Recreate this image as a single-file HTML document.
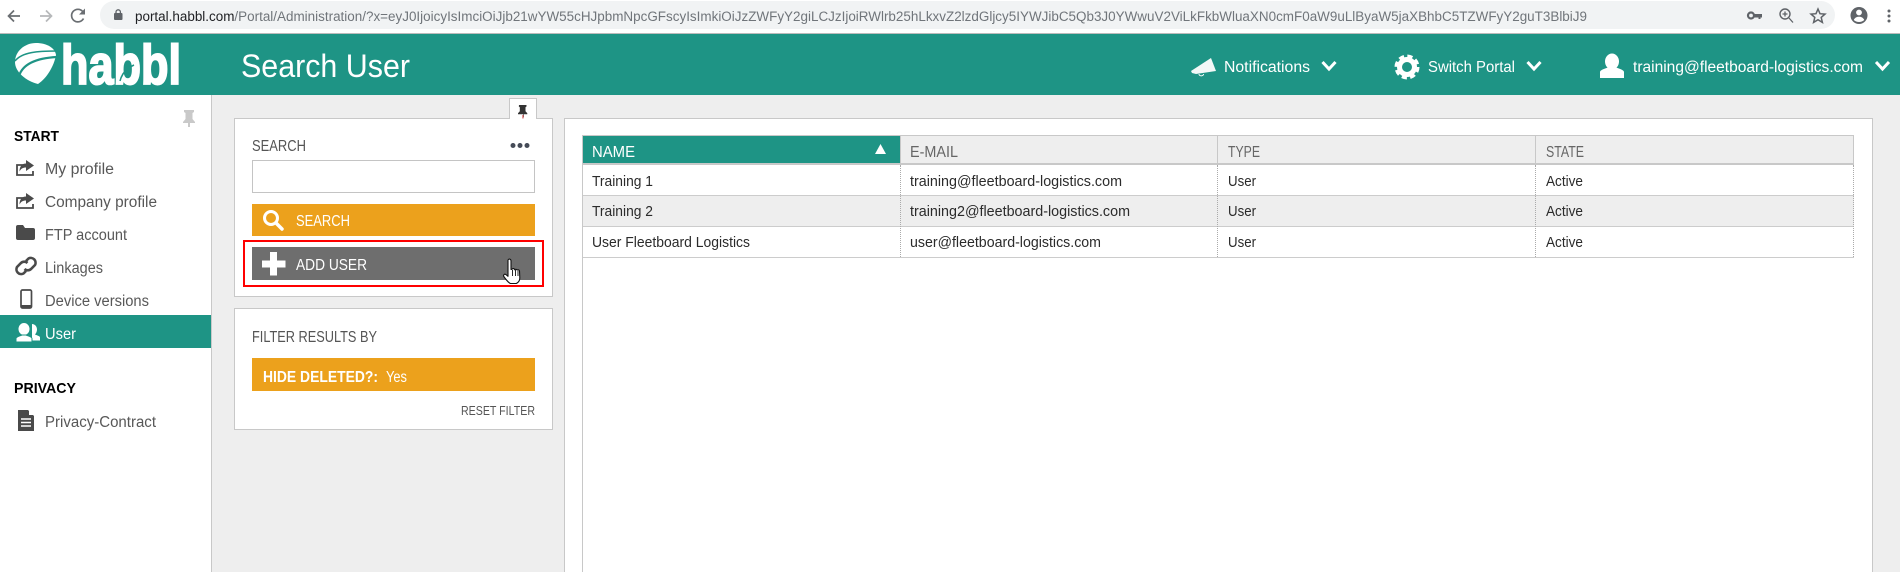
<!DOCTYPE html>
<html lang="en">
<head>
<meta charset="utf-8">
<title>Search User</title>
<style>
html,body{margin:0;padding:0;width:1900px;height:572px;overflow:hidden;background:#eee;font-family:"Liberation Sans",sans-serif}
.b{position:absolute;box-sizing:border-box}
svg{position:absolute;left:0;top:0}
text{font-family:"Liberation Sans",sans-serif;white-space:pre}
.s{font-size:15.5px;fill:#585858}
.h{font-size:15px;fill:#000;font-weight:bold}
.l{font-size:16px;fill:#555}
.w{font-size:15.5px;fill:#fff}
.t{font-size:14.5px;fill:#2b2b2b}
.th{font-size:16px;fill:#666}
</style>
</head>
<body>
<!-- browser chrome -->
<div class="b" style="left:0;top:0;width:1900px;height:34px;background:#fff;border-bottom:1px solid #bbb"></div>
<div class="b" style="left:100px;top:1px;width:1735px;height:28px;background:#f1f3f4;border-radius:14px"></div>
<!-- header -->
<div class="b" style="left:0;top:34px;width:1900px;height:61px;background:#1e9485"></div>
<!-- sidebar -->
<div class="b" style="left:0;top:95px;width:212px;height:477px;background:#fff;border-right:1px solid #c8c8c8"></div>
<div class="b" style="left:0;top:315px;width:211px;height:33px;background:#1e9485"></div>
<!-- search panel -->
<div class="b" style="left:509px;top:98px;width:28px;height:21px;background:#fff;border:1px solid #c8c8c8;border-bottom:0"></div>
<div class="b" style="left:234px;top:118px;width:319px;height:179px;background:#fff;border:1px solid #c8c8c8"></div>
<div class="b" style="left:510px;top:117px;width:26px;height:3px;background:#fff"></div>
<div class="b" style="left:252px;top:160px;width:283px;height:33px;background:#fff;border:1px solid #c4c4c4"></div>
<div class="b" style="left:252px;top:204px;width:283px;height:32px;background:#eca11c"></div>
<div class="b" style="left:252px;top:247px;width:283px;height:33px;background:#6e6e6e"></div>
<div class="b" style="left:243px;top:240px;width:301px;height:47px;border:2px solid #f00"></div>
<!-- filter panel -->
<div class="b" style="left:234px;top:308px;width:319px;height:122px;background:#fff;border:1px solid #c8c8c8"></div>
<div class="b" style="left:252px;top:358px;width:283px;height:33px;background:#eca11c"></div>
<!-- results panel -->
<div class="b" style="left:564px;top:118px;width:1309px;height:454px;background:#fff;border:1px solid #c8c8c8;border-bottom:0"></div>
<!-- table -->
<div class="b" style="left:582px;top:135px;width:1272px;height:30px;background:#eee;border:1px solid #c8c8c8;border-bottom:2px solid #c8c8c8"></div>
<div class="b" style="left:583px;top:136px;width:317px;height:27px;background:#1e9485"></div>
<div class="b" style="left:582px;top:196px;width:1272px;height:30px;background:#eee"></div>
<div class="b" style="left:582px;top:195px;width:1272px;height:1px;background:#ccc"></div>
<div class="b" style="left:582px;top:226px;width:1272px;height:1px;background:#ccc"></div>
<div class="b" style="left:582px;top:257px;width:1272px;height:1px;background:#ccc"></div>
<div class="b" style="left:582px;top:135px;width:1px;height:437px;background:#c8c8c8"></div>
<div class="b" style="left:900px;top:136px;width:1px;height:27px;background:#c8c8c8"></div>
<div class="b" style="left:1217px;top:136px;width:1px;height:27px;background:#c8c8c8"></div>
<div class="b" style="left:1535px;top:136px;width:1px;height:27px;background:#c8c8c8"></div>
<div class="b" style="left:900px;top:165px;width:0;height:92px;border-left:1px dotted #aaa"></div>
<div class="b" style="left:1217px;top:165px;width:0;height:92px;border-left:1px dotted #aaa"></div>
<div class="b" style="left:1535px;top:165px;width:0;height:92px;border-left:1px dotted #aaa"></div>
<div class="b" style="left:1853px;top:165px;width:0;height:92px;border-left:1px dotted #aaa"></div>

<svg width="1900" height="572" viewBox="0 0 1900 572" xmlns="http://www.w3.org/2000/svg">
  <!-- chrome nav icons -->
  <path d="M20 16H9M14 10.500L8.500 16l5.500 5.500" fill="none" stroke="#6a6e72" stroke-width="1.700"/>
  <path d="M40 16h11M46 10.500L51.500 16 46 21.500" fill="none" stroke="#b6b8ba" stroke-width="1.700"/>
  <path d="M83.500 18.500A6.300 6.300 0 1 1 82.700 11.500" fill="none" stroke="#6a6e72" stroke-width="1.700"/>
  <path d="M85 8.500v6h-6z" fill="#6a6e72"/>
  <rect x="114" y="13" width="8.500" height="7" rx="1" fill="#5f6368"/>
  <path d="M116 13.500v-1.500a2.200 2.200 0 0 1 4.400 0v1.500" fill="none" stroke="#5f6368" stroke-width="1.300"/>
  <text x="135" y="21" font-size="13.500" fill="#70757a" textLength="1452" lengthAdjust="spacingAndGlyphs"><tspan fill="#202124">portal.habbl.com</tspan>/Portal/Administration/?x=eyJ0IjoicyIsImciOiJjb21wYW55cHJpbmNpcGFscyIsImkiOiJzZWFyY2giLCJzIjoiRWlrb25hLkxvZ2lzdGljcy5IYWJibC5Qb3J0YWwuV2ViLkFkbWluaXN0cmF0aW9uLlByaW5jaXBhbC5TZWFyY2guT3BlbiJ9</text>
  <!-- key -->
  <circle cx="1751" cy="15.500" r="3" fill="none" stroke="#5f6368" stroke-width="2.200"/>
  <path d="M1754 14h8v3.500h-1.500v1.500h-2v-1.500h-4.500z" fill="#5f6368"/>
  <!-- zoom -->
  <circle cx="1785" cy="14" r="5" fill="none" stroke="#5f6368" stroke-width="1.400"/>
  <path d="M1789 18l4 4.500M1785 11.500v5M1782.500 14h5" stroke="#5f6368" stroke-width="1.300" fill="none"/>
  <!-- star -->
  <path d="M1818 9l2 4.700 5 .4-3.800 3.300 1.200 5-4.400-2.700-4.400 2.700 1.200-5-3.800-3.300 5-.4z" fill="none" stroke="#5f6368" stroke-width="1.500"/>
  <!-- avatar -->
  <circle cx="1859" cy="15.500" r="8.500" fill="#5f6368"/>
  <circle cx="1859" cy="12.500" r="2.900" fill="#fff"/>
  <path d="M1853.800 20c1-2.300 3-3.200 5.200-3.200s4.200.9 5.200 3.200c-1.400 1.400-3.200 2-5.200 2s-3.800-.6-5.200-2z" fill="#fff"/>
  <circle cx="1889" cy="11" r="1.500" fill="#5f6368"/><circle cx="1889" cy="16" r="1.500" fill="#5f6368"/><circle cx="1889" cy="21" r="1.500" fill="#5f6368"/>

  <!-- logo -->
  <path d="M36 43C47 43 55 48 56 55C54 66 47 78 38 84C26 81 15 72 15 62C15 51 25 43 36 43z" fill="#fff"/>
  <path d="M15 61C22 52 38 51 57 51" fill="none" stroke="#1e9485" stroke-width="1.500"/>
  <path d="M19 76C23 63 38 58 57 57" fill="none" stroke="#1e9485" stroke-width="2.200"/>
  <text x="61" y="84" font-size="56" font-weight="bold" fill="#fff" stroke="#fff" stroke-width="2" textLength="120" lengthAdjust="spacingAndGlyphs">habbl</text>
  <path d="M120 81C122 73 127 68 134 65" fill="none" stroke="#1e9485" stroke-width="1.500"/>

  <text x="241" y="77" font-size="32" fill="#fff" textLength="169" lengthAdjust="spacingAndGlyphs">Search User</text>

  <!-- notifications -->
  <path d="M1191 71L1211 58l5 13-20 3-4-1z" fill="#f2f8f7"/>
  <path d="M1199 74c0 2.500 4.500 2.500 4.500 0" fill="none" stroke="#fff" stroke-width="1"/>
  <text class="w" x="1224" y="72" textLength="86" lengthAdjust="spacingAndGlyphs">Notifications</text>
  <path d="M1322.500 62l6.500 7 6.500-7" fill="none" stroke="#fff" stroke-width="3"/>
  <!-- gear -->
  <circle cx="1407" cy="67" r="7.500" fill="none" stroke="#fff" stroke-width="5"/>
  <circle cx="1407" cy="67" r="10.500" fill="none" stroke="#fff" stroke-width="4" stroke-dasharray="5 3.250"/>
  <text class="w" x="1428" y="72" textLength="87" lengthAdjust="spacingAndGlyphs">Switch Portal</text>
  <path d="M1527.500 62l6.500 7 6.500-7" fill="none" stroke="#fff" stroke-width="3"/>
  <!-- user -->
  <ellipse cx="1612" cy="61.500" rx="7" ry="8" fill="#fff"/>
  <path d="M1600 78v-6c0-2 5-3.500 8-4.500h8c3 1 8 2.500 8 4.500v6z" fill="#fff"/>
  <text class="w" x="1633" y="72" textLength="230" lengthAdjust="spacingAndGlyphs">training@fleetboard-logistics.com</text>
  <path d="M1876 62l6.500 7 6.500-7" fill="none" stroke="#fff" stroke-width="3"/>

  <!-- sidebar pin -->
  <path d="M184 110h10v2l-1.500 1v6l2.500 3v1h-5v4h-2v-4h-5v-1l2.500-3v-6l-1.500-1z" fill="#c9c9c9"/>
  <text class="h" x="14" y="141" textLength="45" lengthAdjust="spacingAndGlyphs">START</text>
  <!-- share icons -->
  <path d="M25 165h-8v10h16v-4" fill="none" stroke="#4a4a4a" stroke-width="1.800"/>
  <path d="M26 160l8 5.500-8 5.500v-3.500c-3 0-5 1-6.500 4 0-5 2.500-8 6.500-8z" fill="#4a4a4a"/>
  <g transform="translate(0,33)">
    <path d="M25 165h-8v10h16v-4" fill="none" stroke="#4a4a4a" stroke-width="1.800"/>
    <path d="M26 160l8 5.500-8 5.500v-3.500c-3 0-5 1-6.500 4 0-5 2.500-8 6.500-8z" fill="#4a4a4a"/>
  </g>
  <path d="M16 227a2 2 0 0 1 2-2h5l2 3h8a2 2 0 0 1 2 2v8a2 2 0 0 1-2 2H18a2 2 0 0 1-2-2z" fill="#4a4a4a"/>
  <!-- link -->
  <path d="M26 261l2.500-2.500a4.800 4.800 0 0 1 6.500 6.500l-4 4a4.800 4.800 0 0 1-6.500 0" fill="none" stroke="#4a4a4a" stroke-width="2.600"/>
  <path d="M26 271l-2.500 2.500a4.800 4.800 0 0 1-6.500-6.500l4-4a4.800 4.800 0 0 1 6.500 0" fill="none" stroke="#4a4a4a" stroke-width="2.600"/>
  <!-- device -->
  <rect x="21" y="290" width="10.500" height="18" rx="1.500" fill="none" stroke="#4a4a4a" stroke-width="1.700"/>
  <rect x="21" y="305" width="10.500" height="3.500" fill="#4a4a4a"/>
  <!-- users -->
  <path d="M32 324c3 0 5 2.500 5 5.500 0 2.200-1 3.800-2 5 2 1 5 1.500 5 3v3H32z" fill="#fff"/>
  <ellipse cx="24" cy="329" rx="6" ry="6.500" fill="#fff" stroke="#1e9485" stroke-width="1"/>
  <path d="M16 342v-3.500c0-1.700 4-2.500 6-3.500h4c2 1 6 1.800 6 3.500v3.500z" fill="#fff" stroke="#1e9485" stroke-width="1"/>
  <!-- doc -->
  <path d="M18 410h10l6 6v15H18z" fill="#4a4a4a"/>
  <path d="M29 410l5 5h-5z" fill="#fff"/>
  <path d="M21 419h10M21 422.500h10M21 426h10" stroke="#fff" stroke-width="1.400"/>

  <text class="s" x="45" y="174" textLength="69" lengthAdjust="spacingAndGlyphs">My profile</text>
  <text class="s" x="45" y="207" textLength="112" lengthAdjust="spacingAndGlyphs">Company profile</text>
  <text class="s" x="45" y="240" textLength="82" lengthAdjust="spacingAndGlyphs">FTP account</text>
  <text class="s" x="45" y="273" textLength="58" lengthAdjust="spacingAndGlyphs">Linkages</text>
  <text class="s" x="45" y="306" textLength="104" lengthAdjust="spacingAndGlyphs">Device versions</text>
  <text class="w" x="45" y="339" textLength="31" lengthAdjust="spacingAndGlyphs">User</text>
  <text class="h" x="14" y="393" textLength="62" lengthAdjust="spacingAndGlyphs">PRIVACY</text>
  <text class="s" x="45" y="427" textLength="111" lengthAdjust="spacingAndGlyphs">Privacy-Contract</text>

  <!-- tab pin -->
  <path d="M519 105h7.500v1.500l-1 .8v4l1.800 2v1h-3.500v3h-.6v-3h-5.200v-1l1.800-2v-4l-1-.8z" fill="#333"/>
  <path d="M522.500 115h.9v3.500h-.9z" fill="#c22"/>

  <text class="l" x="252" y="151" textLength="54" lengthAdjust="spacingAndGlyphs">SEARCH</text>
  <circle cx="513" cy="145.500" r="2.500" fill="#454b57"/><circle cx="520" cy="145.500" r="2.500" fill="#454b57"/><circle cx="527" cy="145.500" r="2.500" fill="#454b57"/>

  <circle cx="271" cy="218" r="6.500" fill="none" stroke="#fff" stroke-width="3"/>
  <path d="M276 223l6 6" stroke="#fff" stroke-width="3.500" stroke-linecap="round"/>
  <text class="w" x="296" y="226" font-size="16" style="font-size:16px" textLength="54" lengthAdjust="spacingAndGlyphs">SEARCH</text>

  <path d="M270 252h7v8.500h8.500v7H277v8h-7v-8h-8v-7h8z" fill="#fff"/>
  <text class="w" x="296" y="270" style="font-size:16px" textLength="71" lengthAdjust="spacingAndGlyphs">ADD USER</text>

  <!-- hand cursor -->
  <path d="M508 260c1-1.500 3-1 3 1v8.500l1-.2c.5-1 2-1 2.500 0l.2.500c.6-.8 2-.7 2.500.3.700-.5 2-.2 2.300.9l.3 7c0 2.500-1.500 4.500-3.500 5.500h-6c-2-1-4-3.500-6.500-7-.8-1.300.5-2.800 2-2l2.200 1.800z" fill="#fff" stroke="#111" stroke-width="1.100" stroke-linejoin="round"/>
  <path d="M512.500 270v6M515.500 270v6M518 271v5" stroke="#111" stroke-width=".9"/>

  <text class="l" x="252" y="342" textLength="125" lengthAdjust="spacingAndGlyphs">FILTER RESULTS BY</text>
  <text class="w" font-weight="bold" x="263" y="382" textLength="115" lengthAdjust="spacingAndGlyphs">HIDE DELETED?:</text>
  <text class="w" x="386" y="382" textLength="21" lengthAdjust="spacingAndGlyphs">Yes</text>
  <text x="461" y="415" font-size="13" fill="#555" textLength="74" lengthAdjust="spacingAndGlyphs">RESET FILTER</text>

  <!-- table -->
  <text class="w" x="592" y="157" style="font-size:16px" textLength="43" lengthAdjust="spacingAndGlyphs">NAME</text>
  <path d="M880.500 144l5.500 10h-11z" fill="#fff"/>
  <text class="th" x="910" y="157" textLength="48" lengthAdjust="spacingAndGlyphs">E-MAIL</text>
  <text class="th" x="1228" y="157" textLength="32" lengthAdjust="spacingAndGlyphs">TYPE</text>
  <text class="th" x="1546" y="157" textLength="38" lengthAdjust="spacingAndGlyphs">STATE</text>

  <text class="t" x="592" y="186" textLength="61" lengthAdjust="spacingAndGlyphs">Training 1</text>
  <text class="t" x="910" y="186" textLength="212" lengthAdjust="spacingAndGlyphs">training@fleetboard-logistics.com</text>
  <text class="t" x="1228" y="186" textLength="28" lengthAdjust="spacingAndGlyphs">User</text>
  <text class="t" x="1546" y="186" textLength="37" lengthAdjust="spacingAndGlyphs">Active</text>

  <text class="t" x="592" y="216" textLength="61" lengthAdjust="spacingAndGlyphs">Training 2</text>
  <text class="t" x="910" y="216" textLength="220" lengthAdjust="spacingAndGlyphs">training2@fleetboard-logistics.com</text>
  <text class="t" x="1228" y="216" textLength="28" lengthAdjust="spacingAndGlyphs">User</text>
  <text class="t" x="1546" y="216" textLength="37" lengthAdjust="spacingAndGlyphs">Active</text>

  <text class="t" x="592" y="247" textLength="158" lengthAdjust="spacingAndGlyphs">User Fleetboard Logistics</text>
  <text class="t" x="910" y="247" textLength="191" lengthAdjust="spacingAndGlyphs">user@fleetboard-logistics.com</text>
  <text class="t" x="1228" y="247" textLength="28" lengthAdjust="spacingAndGlyphs">User</text>
  <text class="t" x="1546" y="247" textLength="37" lengthAdjust="spacingAndGlyphs">Active</text>
</svg>
</body>
</html>
